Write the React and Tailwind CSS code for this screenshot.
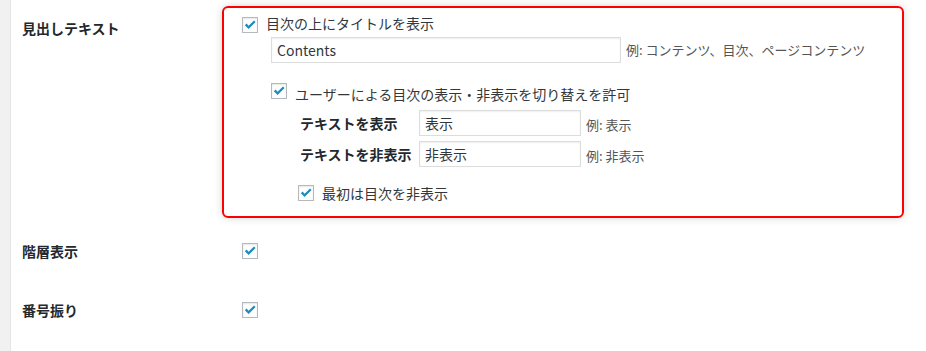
import React from "react";

const font = { fontFamily: '"Noto Sans CJK JP", "Noto Sans", sans-serif' };

function Check() {
  return (
    <span className="flex h-4 w-4 shrink-0 items-center justify-center border border-[#b4b9be] bg-white shadow-[inset_0_1px_2px_rgba(0,0,0,0.1)]">
      <svg width="12" height="10" viewBox="0 0 12 10">
        <path d="M0.8 5.2 L2.6 3.6 L4.6 5.7 L10 0.4 L11.6 2 L4.6 9 Z" fill="#1e8cbe" />
      </svg>
    </span>
  );
}

function Label({ children }) {
  return (
    <div className="w-[211px] shrink-0 pl-[11px] text-[14px] font-bold leading-[20px] text-[#23282d]">
      {children}
    </div>
  );
}

export default function App() {
  return (
    <div className="flex h-[351px] w-[926px] overflow-hidden bg-white" style={font}>
      <div className="w-[11px] shrink-0 border-r border-[#e2e4e7] bg-[#f1f1f1]" />
      <div className="flex flex-1 flex-col">
        {/* Row 1 */}
        <div className="flex pt-[6px]">
          <div className="pt-[12px]">
            <Label>見出しテキスト</Label>
          </div>
          <div className="h-[212px] w-[682px] rounded-[6px] border-2 border-[#ff0000] pl-[18px] pt-[9px] shadow-[0_0_9px_rgba(0,0,0,0.16)]">
            <div className="flex items-center gap-[8px] text-[14px] leading-[16px] text-[#32373c]">
              <Check />
              <span className="-mt-[5px]">目次の上にタイトルを表示</span>
            </div>
            <div className="mt-[4px] flex items-center pl-[29px]">
              <div className="flex h-[26px] w-[350px] items-center border border-[#ddd] bg-white px-[5px] text-[14px] text-[#32373c] shadow-[inset_0_1px_2px_rgba(0,0,0,0.07)]">
                Contents
              </div>
              <span className="ml-[5px] text-[13px] text-[#555]">例: コンテンツ、目次、ページコンテンツ</span>
            </div>
            <div className="mt-[20px] flex items-start gap-[8px] pl-[29px] text-[14px] leading-[16px] text-[#32373c]">
              <Check />
              <span className="mt-[3px]">ユーザーによる目次の表示・非表示を切り替えを許可</span>
            </div>
            <div className="mt-[8px] flex flex-col gap-[5px] pl-[58px]">
              <div className="flex items-center">
                <span className="w-[119px] text-[14px] font-bold text-[#23282d]">テキストを表示</span>
                <div className="flex h-[26px] w-[162px] items-center border border-[#ddd] bg-white px-[5px] text-[14px] text-[#32373c] shadow-[inset_0_1px_2px_rgba(0,0,0,0.07)]">
                  表示
                </div>
                <span className="ml-[5px] mt-[3px] text-[13px] text-[#555]">例: 表示</span>
              </div>
              <div className="flex items-center">
                <span className="w-[119px] text-[14px] font-bold text-[#23282d]">テキストを非表示</span>
                <div className="flex h-[26px] w-[162px] items-center border border-[#ddd] bg-white px-[5px] text-[14px] text-[#32373c] shadow-[inset_0_1px_2px_rgba(0,0,0,0.07)]">
                  非表示
                </div>
                <span className="ml-[5px] mt-[3px] text-[13px] text-[#555]">例: 非表示</span>
              </div>
            </div>
            <div className="mt-[18px] flex items-center gap-[8px] pl-[56px] text-[14px] leading-[16px] text-[#32373c]">
              <Check />
              <span>最初は目次を非表示</span>
            </div>
          </div>
        </div>
        {/* Row 2 */}
        <div className="mt-[23px] flex items-center">
          <Label>階層表示</Label>
          <div className="pl-[20px]">
            <Check />
          </div>
        </div>
        {/* Row 3 */}
        <div className="mt-[39px] flex items-center">
          <Label>番号振り</Label>
          <div className="pl-[20px]">
            <Check />
          </div>
        </div>
      </div>
    </div>
  );
}
